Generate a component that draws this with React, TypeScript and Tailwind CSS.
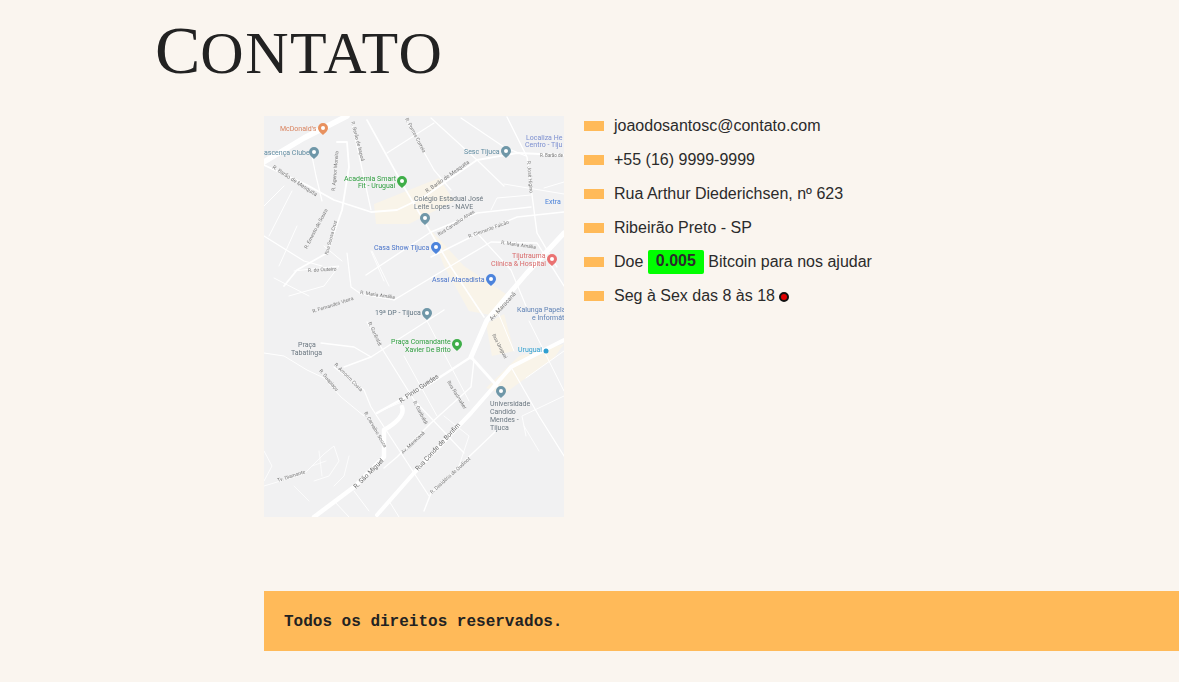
const roads: [string, number][] = [
  ["M83 0L40 22L0 46", 5.5],
  ["M300 117L262 158L223 204L207 241", 5],
  ["M300 224L247 251L207 297L150 357L113 399", 4],
  ["M207 241L167 267L113 297", 2.5],
  ["M207 241L233 270", 3],
  ["M138 291Q142 301 120 314L120 341L90 371L50 401", 4.5],
  ["M0 49L43 69L70 84L107 96L133 94L160 81L187 62L213 44L253 37L300 39", 1.8],
  ["M73 26L83 26L85 51L78 94L63 137L33 154L20 170", 1.8],
  ["M88 7L107 94", 1.2],
  ["M103 4L140 71L187 151L220 201", 1.6],
  ["M142 4L170 54L187 74", 1.2],
  ["M123 37L170 7", 1.2],
  ["M167 2L213 44L240 70", 1.2],
  ["M197 2L240 31L262 40", 1.2],
  ["M243 1L263 41L273 117L293 151", 1.4],
  ["M102 159L167 116L213 97L267 91", 1.4],
  ["M167 141L207 121L253 101L300 96", 1.4],
  ["M130 184L200 142L227 126L273 127L300 170", 1.4],
  ["M83 137L87 171L97 178L130 184", 1.2],
  ["M227 94L233 82L267 79", 1],
  ["M213 117L247 154L262 190", 1.2],
  ["M47 35L52 60L58 85", 1.2],
  ["M20 70L0 90M28 75L5 120", 1],
  ["M0 120L40 145L58 150", 1.2],
  ["M33 110L15 150M60 130L78 145", 1],
  ["M240 68L300 78M280 72L300 66", 1],
  ["M107 135L120 165M108 135L125 170", 0.9],
  ["M30 155L75 150L60 170L25 180", 1],
  ["M10 162L45 180", 1],
  ["M57 227L90 231L107 241", 1.3],
  ["M103 206L117 231L150 284L200 337", 1.2],
  ["M80 251L107 241L180 194", 1.4],
  ["M70 251L100 274L107 291L150 357L165 380", 1.2],
  ["M140 240L173 300", 1],
  ["M163 205L205 285", 1],
  ["M210 244L207 271L167 307L133 341L120 352", 1.4],
  ["M233 314L167 377L160 395", 1.4],
  ["M247 251L275 300L300 340", 1.2],
  ["M262 262L300 235", 1],
  ["M262 320L258 300L300 280", 0.9],
  ["M233 194L250 235M265 205L300 275", 1],
  ["M0 237L20 240L43 254L60 262L77 281L100 300", 1],
  ["M112 297L140 285", 1],
  ["M0 370L40 358L60 338L70 330L75 345L65 360L50 365", 0.8],
  ["M0 335L8 350L0 365M85 340L80 360L70 370", 0.8],
  ["M48 350L62 345M55 335L58 360M30 370L45 385", 0.7],
  ["M90 375L105 395M70 385L85 401M125 385L135 401", 1],
  ["M180 300L205 320L195 350", 0.8],
  ["M260 310L275 335", 0.8],
];

const labels: [string, number, number, string, number?, number?][] = [
  ["McDonald's", 16, 15, "#d9835f", 7],
  ["ascença Clube", 0, 39, "#5f8ba0", 7],
  ["Sesc Tijuca", 200, 38, "#5f8ba0", 7],
  ["Localiza He", 262, 24, "#7c8fd0", 7],
  ["Centro - Tiju", 261, 31, "#7c8fd0", 7],
  ["Academia Smart", 80, 65, "#2e9e3f", 7],
  ["Fit - Uruguai", 94, 72, "#2e9e3f", 7],
  ["Colégio Estadual José", 150, 85, "#6b7780", 7],
  ["Leite Lopes - NAVE", 150, 93, "#6b7780", 7],
  ["Extra", 281, 88, "#4a82d9", 7],
  ["Casa Show Tijuca", 110, 134, "#4a74c9", 7],
  ["Tijutrauma", 248, 142, "#d96a6a", 7],
  ["Clínica & Hospital", 227, 150, "#d96a6a", 7],
  ["Assaí Atacadista", 168, 166, "#4a74c9", 7],
  ["19ª DP - Tijuca", 111, 199, "#5f7380", 7],
  ["Kalunga Papela", 253, 196, "#5f82b5", 7],
  ["e Informát", 268, 204, "#5f82b5", 7],
  ["Praça Comandante", 127, 228, "#2e9e3f", 7],
  ["Xavier De Brito", 141, 236, "#2e9e3f", 7],
  ["Praça", 34, 231, "#6b7780", 7],
  ["Tabatinga", 27, 239, "#6b7780", 7],
  ["Uruguai", 254, 236, "#2f9fd0", 7],
  ["Universidade", 226, 290, "#6b7780", 7],
  ["Candido", 226, 298, "#6b7780", 7],
  ["Mendes -", 226, 306, "#6b7780", 7],
  ["Tijuca", 226, 314, "#6b7780", 7],
  ["R. Barão de Mesquita", 8, 52, "#7b7b7b", 5.5, 33],
  ["R. Barão de Mesquita", 163, 77, "#7b7b7b", 5.5, -35],
  ["R. Maria Amália", 237, 128, "#7b7b7b", 5, 8],
  ["R. Maria Amália", 96, 178, "#7b7b7b", 5, 8],
  ["R. do Outeiro", 44, 156, "#7b7b7b", 5, -3],
  ["R. Fernandes Vieira", 49, 197, "#7b7b7b", 5, -18],
  ["R. Clemente Falcão", 205, 122, "#7b7b7b", 5, -20],
  ["Rua Carvalho Alves", 175, 120, "#7b7b7b", 5, -33],
  ["R. Ernesto de Souza", 43, 133, "#7b7b7b", 5, -62],
  ["Rua Sousa Cruz", 64, 139, "#7b7b7b", 5, -75],
  ["R. Agenor Moreira", 71, 75, "#7b7b7b", 5, -85],
  ["R. Barão de Itapoá", 87, 6, "#7b7b7b", 5, 75],
  ["R. Pontes Correia", 141, 3, "#7b7b7b", 5, 62],
  ["R. Barão de", 276, 41, "#7b7b7b", 4.5],
  ["R. José Higino", 263, 45, "#7b7b7b", 5, 85],
  ["Av. Maracanã", 228, 205, "#7b7b7b", 6, -48],
  ["R. Pinto Guedes", 137, 287, "#666", 6.5, -34],
  ["R. Garibaldi", 104, 207, "#7b7b7b", 5, 65],
  ["R. Garibaldi", 149, 286, "#7b7b7b", 5, 62],
  ["Rua Uruguai", 228, 219, "#7b7b7b", 5, 62],
  ["Rua Radmaker", 183, 266, "#7b7b7b", 5, 58],
  ["R. Amorim Costa", 70, 249, "#7b7b7b", 5, 45],
  ["R. Carvalho Souza", 100, 297, "#7b7b7b", 5, 60],
  ["R. Guapiaçu", 55, 255, "#7b7b7b", 5, 50],
  ["Av. Maracanã", 139, 338, "#7b7b7b", 5, -43],
  ["R. São Miguel", 92, 373, "#666", 6.5, -45],
  ["Rua Conde de Bonfim", 154, 355, "#666", 6.5, -47],
  ["R. Desidério de Oudinot", 168, 378, "#7b7b7b", 5, -42],
  ["Tv. Diamante", 14, 366, "#7b7b7b", 5, -18],
];

const pins: [number, number, string][] = [
  [59, 12, "#e8915f"],
  [50, 36, "#6f97a8"],
  [138, 65, "#3fae49"],
  [242, 35, "#6f97a8"],
  [161, 102, "#6f97a8"],
  [172, 131, "#4d84dc"],
  [288, 143, "#ea7272"],
  [227, 163, "#4d84dc"],
  [163, 197, "#6f97a8"],
  [193, 228, "#3fae49"],
  [237, 275, "#6f97a8"],
];

function MapImage() {
  return (
    <svg width="300" height="401" viewBox="0 0 300 401" className="shrink-0 bg-[#f1f1f2] blur-[0.3px]">
      <path
        d="M110 88L175 62L190 85L145 108L112 108Z M165 112L200 150L245 180L232 200L205 195L180 150Z M255 240L300 228L290 242L262 262L240 278L222 272Z M222 208L240 198L250 235L228 240Z"
        fill="#f9f4e9"
      />
      <g fill="none" stroke="#ffffff" strokeLinecap="round" strokeLinejoin="round">
        {roads.map(([d, w], i) => (
          <path key={i} d={d} strokeWidth={w} />
        ))}
      </g>
      <g fontFamily="Roboto, sans-serif">
        {labels.map(([text, x, y, color, size, angle], i) => (
          <text
            key={i}
            x={x}
            y={y}
            fill={color}
            fontSize={size ?? 6.5}
            transform={angle ? `rotate(${angle} ${x} ${y})` : undefined}
          >
            {text}
          </text>
        ))}
      </g>
      {pins.map(([x, y, color], i) => (
        <g key={i}>
          <path d={`M${x - 5} ${y}a5 5 0 1 1 10 0c0 3-3 5-5 7c-2-2-5-4-5-7z`} fill={color} />
          <circle cx={x} cy={y} r="2" fill="#ffffff" />
        </g>
      ))}
      <circle cx="282" cy="235" r="2.5" fill="#2f9fd0" />
    </svg>
  );
}

function Item({ children }: { children: React.ReactNode }) {
  return (
    <li className="flex items-center h-[20px] gap-[10px]">
      <span className="w-[20px] h-[10px] bg-[#ffba59] shrink-0"></span>
      <span className="block whitespace-pre">{children}</span>
    </li>
  );
}

export default function App() {
  return (
    <main className="w-[1179px] h-[682px] overflow-hidden bg-[#faf5ef] text-[#2b2b2b] font-['Liberation_Sans',Arial,sans-serif]">
      <h1 className="pl-[155px] pt-[8px] h-[116px] leading-[84px] font-normal text-[#222222] font-['Liberation_Serif',serif]">
        <span className="text-[68px]">C</span>
        <span className="text-[60px] uppercase tracking-[1.5px]">ontato</span>
      </h1>

      <section className="flex ml-[264px] gap-[20px] h-[475px]">
        <div>
          <MapImage />
        </div>
        <ul className="flex flex-col gap-[14px] text-[16px]">
          <Item>joaodosantosc@contato.com</Item>
          <Item>+55 (16) 9999-9999</Item>
          <Item>Rua Arthur Diederichsen, nº 623</Item>
          <Item>Ribeirão Preto - SP</Item>
          <Item>
            Doe{" "}
            <b className="inline-block w-[56px] h-[24px] leading-[22px] text-center rounded-[2px] bg-[#00ff00] align-middle">
              0.005
            </b>{" "}
            Bitcoin para nos ajudar
          </Item>
          <Item>
            Seg à Sex das 8 às 18{" "}
            <span className="inline-block w-[10px] h-[10px] rounded-full bg-[#e00000] border-2 border-[#111111] align-middle"></span>
          </Item>
        </ul>
      </section>

      <footer className="ml-[264px] h-[60px] flex items-center pl-[20px] pt-[2px] bg-[#ffba59] text-[#222222] font-['Liberation_Mono',monospace] font-bold text-[16px]">
        Todos os direitos reservados.
      </footer>
    </main>
  );
}
